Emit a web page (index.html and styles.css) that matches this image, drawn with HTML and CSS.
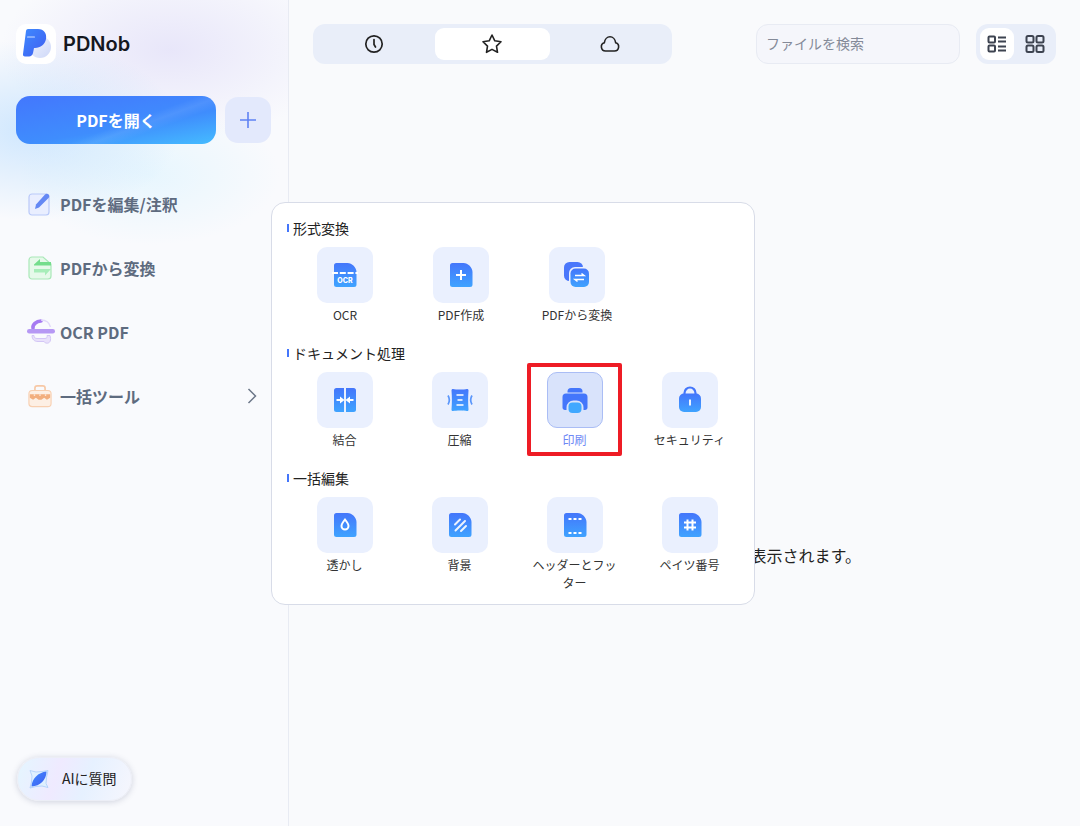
FILE: index.html
```html
<!DOCTYPE html>
<html lang="ja">
<head>
<meta charset="utf-8">
<title>PDNob</title>
<link rel="stylesheet" href="styles.css">
</head>
<body>
<svg class="defs" aria-hidden="true"><defs>
<linearGradient id="g" x1="0" y1="0" x2="0" y2="1"><stop offset="0" stop-color="#4476fb"/><stop offset="1" stop-color="#3fa3ff"/></linearGradient>
<linearGradient id="gp" x1="0" y1="0" x2="1" y2="1"><stop offset="0" stop-color="#3f8bff"/><stop offset="1" stop-color="#3f5cf0"/></linearGradient>
<linearGradient id="gb" x1="0" y1="0" x2="1" y2="1"><stop offset="0" stop-color="#f2f5fe"/><stop offset="1" stop-color="#ced8f8"/></linearGradient>
<path id="doc" d="M7 4h11.500c4.500 0 9 4.500 9 9v12.500a2.500 2.500 0 0 1-2.500 2.500H7.500A2.500 2.500 0 0 1 5 25.500V6.500A2.500 2.500 0 0 1 7.500 4z" fill="url(#g)"/>
</defs></svg>
<div class="app">
  <aside class="sidebar">
    <div class="brand">
      <div class="logo">
        <svg viewBox="0 0 40 40" width="40" height="40"><circle cx="24" cy="23" r="11" fill="url(#gb)"/><path d="M12 5h10c6 0 9 4.500 8 10-1 5.500-5.500 9-11 9h-1l-1 5c-.5 2-2 3.500-4 3.500H9c-1.500 0-2.300-1-2-2.500L10 7c.2-1.200 1-2 2-2z" fill="url(#gp)"/><rect x="11" y="12.500" width="8" height="1" rx=".5" fill="#cfe0ff"/></svg>
      </div>
      <span class="brand-name">PDNob</span>
    </div>
    <div class="actions">
      <button class="open-btn">PDFを開く</button>
      <button class="add-btn"><svg viewBox="0 0 18 18" width="18" height="18"><path d="M9 1v16M1 9h16" stroke="#5f82f3" stroke-width="1.600" fill="none"/></svg></button>
    </div>
    <nav class="nav">
      <a class="nav-item">
        <svg class="nav-icon" viewBox="0 0 24 24"><rect x="1" y="2" width="20" height="21" rx="3" fill="#e9eeff" stroke="#b9c9f9" stroke-width="1.200"/><path d="M7 17l1-4.500 9-10c1-1 2.500-1 3.500 0s1 2.500 0 3.500l-9.500 9.500z" fill="#6488f4"/></svg>
        <span>PDFを編集/注釈</span>
      </a>
      <a class="nav-item">
        <svg class="nav-icon" viewBox="0 0 24 24"><path d="M4 1h11l8 7v12a3 3 0 0 1-3 3H4a3 3 0 0 1-3-3V4a3 3 0 0 1 3-3z" fill="#e6f9ea" stroke="#a9e8b8" stroke-width="1.200"/><path d="M6 8.500l6-5.500v3h11v3.500H6z" fill="#74dd8c"/><path d="M23 13H6v3.500h11v3z" fill="#a7edb9"/></svg>
        <span>PDFから変換</span>
      </a>
      <a class="nav-item">
        <svg class="nav-icon ocr" viewBox="0 0 30 28"><path d="M7 10c-.5-3 3-7 8-7" stroke="#a67af2" stroke-width="3.600" fill="none" stroke-linecap="round"/><path d="M15 2c5 0 8.500 3 9.500 7" stroke="#e2d9f9" stroke-width="1.400" fill="none"/><rect x="1" y="11" width="28" height="4.500" rx="2.200" fill="#b698f4"/><path d="M6 17.500c0 4 2.500 6 6 6h6c1 2 4.500 2.500 6 0 1-2 .5-4 0-6h-3c.5 1.500 0 3-2 3h-8c-2 0-3-1-3-3z" fill="#e9e1fb" stroke="#d3c6f6" stroke-width="1"/></svg>
        <span>OCR PDF</span>
      </a>
      <a class="nav-item">
        <svg class="nav-icon" viewBox="0 0 26 26"><path d="M7.500 7V4.500a2.500 2.500 0 0 1 2.500-2.500h6a2.500 2.500 0 0 1 2.500 2.500V7" fill="none" stroke="#f7c8a6" stroke-width="1.800"/><rect x="1" y="7" width="24" height="17.500" rx="3.500" fill="#fdefe4" stroke="#f8cfb0" stroke-width="1.200"/><path d="M2 11h22v4l-3.500 2-3-2-3 2h-3l-3-2-3 2L2 15z" fill="#f2ae7e"/><path d="M7 11v2M13 11v2M19 11v2" stroke="#fbe3d2" stroke-width="1.500"/></svg>
        <span>一括ツール</span>
        <svg class="chevron" viewBox="0 0 10 16" width="10" height="16"><path d="M1.500 1L8.500 8l-7 7" fill="none" stroke="#6b7688" stroke-width="1.500"/></svg>
      </a>
    </nav>
    <button class="ai-btn">
      <svg viewBox="0 0 20 20" width="20" height="20"><path d="M1 1.500l6 1.500 6-.5 6-1-1.500 7-.5 6 2 4-6-1.500-6 .5-6 1.500 1.500-6 .5-6z" fill="#dff0ff" stroke="#a9cdf9" stroke-width=".8"/><path d="M2.500 17.500C3 9.500 9 3.500 17.500 2.500c0 8.500-6.500 14.500-15 15z" fill="url(#gp)"/></svg>
      <span>AIに質問</span>
    </button>
  </aside>
  <main class="main">
    <header class="topbar">
      <div class="tabs">
        <button class="tab">
          <svg viewBox="0 0 20 20" width="20" height="20"><circle cx="10" cy="10" r="8.200" fill="none" stroke="#222" stroke-width="1.700"/><path d="M10 5.500V10.500l1.500 2.500" fill="none" stroke="#222" stroke-width="1.700" stroke-linecap="round"/></svg>
        </button>
        <button class="tab active">
          <svg viewBox="0 0 20 20" width="20" height="20"><path d="M10 1l2.800 5.800 6.200.9-4.500 4.400 1 6.200L10 15.400l-5.500 2.900 1-6.200L1 7.700l6.200-.9z" fill="none" stroke="#222" stroke-width="1.600" stroke-linejoin="round"/></svg>
        </button>
        <button class="tab">
          <svg viewBox="0 0 20 20" width="20" height="20"><path d="M5.500 17h9a4.200 4.200 0 0 0 1.200-8.200C15.200 5.300 12.800 2.800 10 2.800S4.800 5.300 4.300 8.800A4.200 4.200 0 0 0 5.500 17z" fill="none" stroke="#222" stroke-width="1.600" stroke-linejoin="round"/></svg>
        </button>
      </div>
      <div class="search">ファイルを検索</div>
      <div class="views">
        <button class="view active">
          <svg viewBox="0 0 20 20" width="20" height="20" fill="none" stroke="#3d4350" stroke-width="2"><rect x="1.500" y="2.500" width="6.500" height="6" rx="1"/><rect x="1.500" y="11.500" width="6.500" height="6" rx="1"/><path d="M11 3.500h8M11 7.500h8M11 12.500h8M11 16.500h8"/></svg>
        </button>
        <button class="view">
          <svg viewBox="0 0 20 20" width="20" height="20" fill="none" stroke="#3d4350" stroke-width="2"><rect x="1.500" y="2" width="7" height="6.500" rx="1.500"/><rect x="11.500" y="2" width="7" height="6.500" rx="1.500"/><rect x="1.500" y="11.500" width="7" height="6.500" rx="1.500"/><rect x="11.500" y="11.500" width="7" height="6.500" rx="1.500"/></svg>
        </button>
      </div>
    </header>
    <div class="empty">表示されます。</div>
  </main>
  <section class="popup">
    <div class="group">
      <h3 class="group-title">形式変換</h3>
      <div class="grid wide">
        <div class="tool">
          <div class="tile"><svg viewBox="0 0 32 32" width="32" height="32"><use href="#doc"/><path d="M3 14h26" stroke="#fff" stroke-width="1.800" stroke-dasharray="6 1.800"/><text x="16" y="24" class="ocr-text">OCR</text></svg></div>
          <div class="label">OCR</div>
        </div>
        <div class="tool">
          <div class="tile"><svg viewBox="0 0 32 32" width="32" height="32"><use href="#doc"/><path d="M16 11v10M11 16h10" stroke="#fff" stroke-width="2"/></svg></div>
          <div class="label">PDF作成</div>
        </div>
        <div class="tool">
          <div class="tile"><svg viewBox="0 0 32 32" width="32" height="32"><rect x="3" y="3" width="19" height="19" rx="5.500" fill="#4a77fb"/><rect x="8" y="8" width="21.500" height="21.500" rx="6" fill="#eaf0fe"/><rect x="9.500" y="9.500" width="18.500" height="18.500" rx="5" fill="url(#g)"/><path d="M14 16.500h9l-2.500-2M23 20.500h-9l2.500 2" fill="none" stroke="#fff" stroke-width="1.500"/></svg></div>
          <div class="label">PDFから変換</div>
        </div>
      </div>
    </div>
    <div class="group">
      <h3 class="group-title">ドキュメント処理</h3>
      <div class="grid">
        <div class="tool">
          <div class="tile"><svg viewBox="0 0 32 32" width="32" height="32"><path d="M7.500 4H15v24H7.500A2.500 2.500 0 0 1 5 25.500v-19A2.500 2.500 0 0 1 7.500 4z" fill="url(#g)"/><path d="M17 4h7.500A2.500 2.500 0 0 1 27 6.500v19a2.500 2.500 0 0 1-2.500 2.500H17z" fill="url(#g)"/><path d="M7.500 16h6M18.500 16h6" stroke="#fff" stroke-width="2"/><path d="M15.500 16l-4.500-3.600v7.200zM16.500 16l4.500-3.600v7.200z" fill="#fff"/></svg></div>
          <div class="label">結合</div>
        </div>
        <div class="tool">
          <div class="tile"><svg viewBox="0 0 32 32" width="32" height="32"><path d="M9 5c3 .8 11 .8 14 0 1 0 1.500.5 1.500 1.500-.5 6-.5 13 0 19 0 1-.5 1.500-1.500 1.500-3-.8-11-.8-14 0-1 0-1.500-.5-1.500-1.500.5-6 .5-13 0-19C7.500 5.500 8 5 9 5z" fill="url(#g)"/><path d="M12.500 11h7M13.500 16h5M12.500 21h7" stroke="#fff" stroke-width="1.700"/><path d="M4 11.500c1.800 3 1.800 6 0 9M28 11.500c-1.800 3-1.800 6 0 9" fill="none" stroke="#5a96fb" stroke-width="1.700"/></svg></div>
          <div class="label">圧縮</div>
        </div>
        <div class="tool selected">
          <div class="tile"><svg viewBox="0 0 32 32" width="32" height="32"><path d="M8.500 8.500V7.500a3.500 3.500 0 0 1 3.500-3.500h8a3.500 3.500 0 0 1 3.500 3.500v1z" fill="#4476fb"/><path d="M7 9.500h18a3.500 3.500 0 0 1 3.500 3.500v10.500c0 1.500-1 2.500-2.500 2.500h-1.500v-2.500a7 7 0 0 0-7-7h-3a7 7 0 0 0-7 7V26H6c-1.500 0-2.500-1-2.500-2.500V13A3.500 3.500 0 0 1 7 9.500z" fill="#4476fb"/><rect x="9.500" y="18.500" width="13" height="10.500" rx="4" fill="#40a8ff"/></svg></div>
          <div class="label">印刷</div>
        </div>
        <div class="tool">
          <div class="tile"><svg viewBox="0 0 32 32" width="32" height="32"><path d="M10.500 10V9a5.500 5.500 0 0 1 11 0v1" fill="none" stroke="#4476fb" stroke-width="2.200"/><rect x="5" y="9.500" width="22" height="18.500" rx="5" fill="url(#g)"/><path d="M16 15.500v6" stroke="#fff" stroke-width="1.800"/></svg></div>
          <div class="label">セキュリティ</div>
        </div>
      </div>
    </div>
    <div class="group">
      <h3 class="group-title">一括編集</h3>
      <div class="grid">
        <div class="tool">
          <div class="tile"><svg viewBox="0 0 32 32" width="32" height="32"><use href="#doc"/><path d="M16 10.500c2 2.500 3.500 4.500 3.500 6.500a3.500 3.500 0 0 1-7 0c0-2 1.500-4 3.500-6.500z" fill="none" stroke="#fff" stroke-width="2"/></svg></div>
          <div class="label">透かし</div>
        </div>
        <div class="tool">
          <div class="tile"><svg viewBox="0 0 32 32" width="32" height="32"><use href="#doc"/><path d="M11 15.500l5-5M11.500 21.500l9.500-9.500M17 22l5-5" stroke="#fff" stroke-width="2" stroke-linecap="round" opacity=".9"/></svg></div>
          <div class="label">背景</div>
        </div>
        <div class="tool">
          <div class="tile"><svg viewBox="0 0 32 32" width="32" height="32"><use href="#doc"/><path d="M9.500 10h13M9.500 24h13" stroke="#fff" stroke-width="2.200" stroke-dasharray="3 2"/></svg></div>
          <div class="label">ヘッダーとフッター</div>
        </div>
        <div class="tool">
          <div class="tile"><svg viewBox="0 0 32 32" width="32" height="32"><use href="#doc"/><path d="M13.500 10.500v11M18.500 10.500v11M10 13.500h12M10 18.500h12" stroke="#fff" stroke-width="2"/></svg></div>
          <div class="label">ペイツ番号</div>
        </div>
      </div>
    </div>
  </section>
</div>
</body>
</html>
```

FILE: styles.css
```css
*, *::before, *::after { box-sizing: border-box; }
html, body { margin: 0; height: 100%; }
body {
  font-family: "Noto Sans CJK JP", "Noto Sans", sans-serif;
  color: #222;
  overflow: hidden;
}
button { font: inherit; border: 0; padding: 0; background: none; color: inherit; }
.defs { position: absolute; width: 0; height: 0; }
.app { position: relative; display: flex; width: 1080px; height: 826px; background: #f9fafc; }

.sidebar {
  width: 289px;
  flex: none;
  display: flex;
  flex-direction: column;
  padding: 24px 17px 25px 16px;
  border-right: 1px solid #e8ebf3;
  background:
    radial-gradient(ellipse 150px 90px at 30px 130px, rgba(150, 205, 255, .42), rgba(150, 205, 255, 0)),
    radial-gradient(ellipse 130px 70px at 150px 175px, rgba(205, 240, 255, .4), rgba(205, 240, 255, 0)),
    radial-gradient(ellipse 170px 90px at 170px 50px, rgba(225, 222, 248, .7), rgba(225, 222, 248, 0)),
    #f9fafd;
}
.brand { display: flex; align-items: center; gap: 7px; height: 40px; }
.logo { width: 40px; height: 40px; border-radius: 10px; background: #fff; display: flex; }
.brand-name { font-family: Inter, sans-serif; font-weight: 600; font-size: 20px; color: #15181f; }

.actions { display: flex; align-items: center; gap: 9px; margin-top: 32px; }
.open-btn {
  width: 200px; height: 48px; border-radius: 14px;
  color: #fff; font-size: 16px; font-weight: 700;
  background:
    linear-gradient(160deg, rgba(255,255,255,0) 55%, rgba(255,255,255,.08) 62%, rgba(255,255,255,0) 70%),
    linear-gradient(170deg, #4377fd 0%, #3f8dfd 60%, #45bcff 100%);
}
.add-btn { width: 46px; height: 46px; border-radius: 13px; background: #e3e9fc; display: flex; align-items: center; justify-content: center; }

.nav { display: flex; flex-direction: column; margin-top: 28px; }
.nav-item {
  display: flex; align-items: center; height: 64px; padding-left: 12px; gap: 8px;
  font-size: 16px; font-weight: 700; color: #5e6b7f;
}
.nav-icon { width: 24px; height: 24px; flex: none; }
.nav-icon.ocr { width: 30px; height: 28px; margin-left: -2px; margin-right: -4px; }
.chevron { margin-left: auto; margin-right: 14px; }

.ai-btn {
  margin-top: auto; margin-left: 1px; width: 115px; height: 44px; border-radius: 22px;
  display: flex; align-items: center; gap: 13px; padding: 0 0 2px 11px;
  font-size: 14px; color: #222; white-space: nowrap;
  border: 1px solid #eceef6;
  box-shadow: 0 1px 6px rgba(60, 70, 110, .22);
  background: linear-gradient(110deg, #e4f6ff 0%, #efeaff 35%, #e6f1ff 60%, #f6f6fd 100%);
}
.ai-btn svg { margin-top: 2px; }

.main { flex: 1; min-width: 0; display: flex; flex-direction: column; padding: 24px 24px 0; }
.topbar { display: flex; align-items: center; height: 40px; }
.tabs { width: 359px; height: 40px; padding: 4px; gap: 3px; border-radius: 12px; background: #e9eef9; display: flex; }
.tab { flex: 1; border-radius: 9px; display: flex; align-items: center; justify-content: center; padding-right: 1px; }
.tab.active { background: #fff; }
.search {
  margin-left: auto; width: 204px; height: 40px; border-radius: 12px;
  border: 1px solid #e8ebf3; background: #f5f6fb;
  padding: 0 0 2px 9px; display: flex; align-items: center;
  font-size: 14px; color: #848a98;
}
.views { margin-left: 16px; width: 80px; height: 40px; padding: 4px; border-radius: 12px; background: #e9eef9; display: flex; gap: 4px; }
.view { width: 34px; height: 32px; border-radius: 9px; display: flex; align-items: center; justify-content: center; }
.view.active { background: #fff; }
.view:last-child { flex: 1; }

.empty { margin-top: 479px; padding-right: 195px; text-align: right; font-size: 16px; line-height: 24px; color: #222; }

.popup {
  position: absolute; left: 271px; top: 202px; width: 484px; height: 403px;
  background: #fff; border: 1px solid #d8dce8; border-radius: 14px;
  padding: 15px 6px 0 15px;
}
.group + .group { margin-top: 19px; }
.group-title {
  margin: 0 0 9px; height: 20px; font-size: 14px; font-weight: 400; line-height: 20px;
  color: #222; padding-left: 6px; position: relative;
}
.group-title::before {
  content: ""; position: absolute; left: 0; top: 6px; width: 2px; height: 8px; background: #4476fb;
}
.grid { display: grid; grid-template-columns: repeat(4, 115px); }
.grid.wide { grid-template-columns: repeat(4, 116px); }
.tool { position: relative; display: flex; flex-direction: column; align-items: center; }
.tile {
  width: 56px; height: 56px; border-radius: 10px; background: #eaf0fe;
  display: flex; align-items: center; justify-content: center;
}
.label { width: 90px; margin-top: 3px; font-size: 12px; line-height: 18px; text-align: center; color: #333; }
.tool.selected .tile { background: #d9e3fb; border: 1px solid #aabdf5; }
.tool.selected .label { color: #6e88f5; }
.tool.selected::after {
  content: ""; position: absolute; left: 10px; top: -9px; width: 95px; height: 93px;
  border: 4px solid #ee1c25; border-radius: 2px;
}
.ocr-text { font-family: Inter, sans-serif; font-size: 7px; font-weight: 800; fill: #fff; text-anchor: middle; }
```
